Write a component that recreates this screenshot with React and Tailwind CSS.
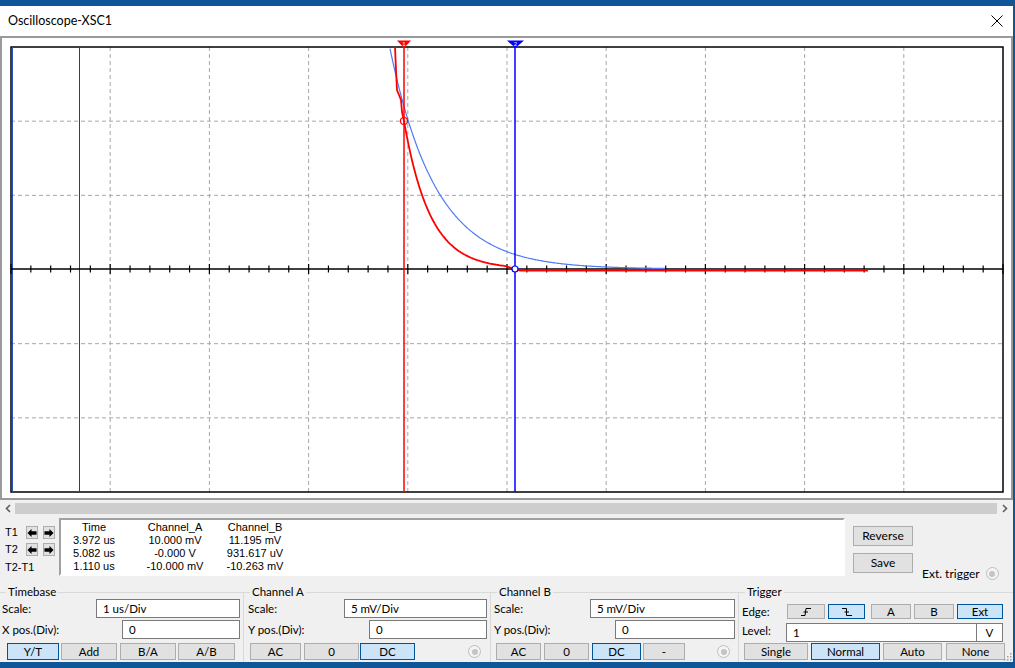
import React from "react";

const L = 11;
const R = 1003;
const T = 47;
const B = 492;
const AXIS = 269;

function pts(list) {
  return list.map(([x, y]) => `${x.toFixed(1)},${y.toFixed(1)}`).join(" ");
}

function redTrace() {
  const out = [[395, 47], [396, 70], [397, 90], [401, 100], [402, 112], [404, 121]];
  for (let x = 405; x <= 505; x += 1) {
    out.push([x, AXIS - 148 * Math.exp(-(x - 404) / 26)]);
  }
  out.push([520, 270.5], [868, 270.5]);
  return out;
}

function blueTrace() {
  const out = [];
  for (let x = 389; x <= 665; x += 1) {
    const y = AXIS - 149 * Math.exp(-(x - 408) / 46);
    if (y >= T) out.push([x, y]);
  }
  return out;
}

function Screen() {
  const dx = (R - L) / 10;
  const dy = (B - T) / 6;
  const ticks = [];
  for (let i = 0; i <= 50; i++) {
    const x = L + i * (dx / 5);
    const h = i % 5 === 0 ? 5 : 3.5;
    ticks.push(<line key={i} x1={x} x2={x} y1={AXIS - h} y2={AXIS + h} stroke="#000" strokeWidth="1.2" />);
  }
  return (
    <svg width="1008" height="460" viewBox="2 38 1008 460" className="block">
      <rect x="2" y="38" width="1008" height="460" fill="#fff" />
      {[1, 2, 3, 4, 5, 6, 7, 8, 9].map((k) => (
        <line key={"v" + k} x1={L + k * dx} x2={L + k * dx} y1={T} y2={B} stroke="#a8a8a8" strokeDasharray="4 3" />
      ))}
      {[1, 2, 4, 5].map((k) => (
        <line key={"h" + k} x1={L} x2={R} y1={T + k * dy} y2={T + k * dy} stroke="#a8a8a8" strokeDasharray="4 3" />
      ))}
      <rect x={L} y={T} width={R - L} height={B - T} fill="none" stroke="#000" strokeWidth="1.5" />
      <line x1="12.5" x2="12.5" y1={T} y2={B} stroke="#2a4fc0" strokeWidth="1" />
      <line x1="79.5" x2="79.5" y1={T} y2={B} stroke="#d00000" strokeWidth="1" />
      <line x1={L} x2={R} y1={AXIS} y2={AXIS} stroke="#000" strokeWidth="1.5" />
      {ticks}
      <polyline points={pts(blueTrace())} fill="none" stroke="#4f7af5" strokeWidth="1.2" />
      <polyline points={pts(redTrace())} fill="none" stroke="#ff0000" strokeWidth="1.8" />
      <line x1="404" x2="404" y1="41" y2={B} stroke="#ff0000" strokeWidth="1.5" />
      <line x1="515" x2="515" y1="41" y2={B} stroke="#0000ff" strokeWidth="1.5" />
      <polygon points="397,40.5 411,40.5 404,48" fill="#ff0000" />
      <text x="404" y="46" fontSize="6" fill="#fff" textAnchor="middle" fontFamily="Liberation Sans">1</text>
      <polygon points="507,40.5 524,40.5 515.5,48" fill="#0000ff" />
      <text x="515.5" y="46" fontSize="6" fill="#fff" textAnchor="middle" fontFamily="Liberation Sans">2</text>
      <circle cx="404" cy="121" r="3.5" fill="none" stroke="#ff0000" strokeWidth="1.2" />
      <circle cx="515" cy="269" r="3" fill="#fff" stroke="#0000ff" strokeWidth="1.2" />
    </svg>
  );
}

function Btn({ children, on, className = "" }) {
  return (
    <div
      className={`flex items-center justify-center border ${on ? "bg-[#cce4f7] border-[#005499]" : "bg-[#e1e1e1] border-[#adadad]"} ${className}`}
    >
      {children}
    </div>
  );
}

function Field({ value, className = "" }) {
  return (
    <div className={`h-[19px] bg-white border border-[#7a7a7a] flex items-center pl-[6px] ${className}`}>{value}</div>
  );
}

function Radio({ className = "" }) {
  return (
    <div className={`w-[13px] h-[13px] rounded-full border border-[#bdbdbd] bg-[#f4f4f4] flex items-center justify-center ${className}`}>
      <div className="w-[6px] h-[6px] rounded-full bg-[#c4c4c4]" />
    </div>
  );
}

function Group({ title, className = "", children }) {
  return (
    <div className={`border-t border-r border-[#d9d9d9] h-[82px] shrink-0 ${className}`}>
      <div className="-mt-[8px] ml-[6px] w-fit px-[2px] bg-[#f0f0f0] leading-[14px]">{title}</div>
      {children}
    </div>
  );
}

function Arrow({ dir }) {
  const d = dir === "left" ? "M0.5 5 L5 0.5 L5 3 L10.5 3 L10.5 7 L5 7 L5 9.5 Z" : "M10.5 5 L6 0.5 L6 3 L0.5 3 L0.5 7 L6 7 L6 9.5 Z";
  return (
    <div className="w-[12px] h-[13px] bg-[#e1e1e1] border border-[#adadad] flex items-center justify-center">
      <svg width="11" height="10" viewBox="0 0 11 10">
        <path d={d} fill="#000" />
      </svg>
    </div>
  );
}

function EdgeIcon({ falling }) {
  return (
    <svg width="12" height="10" viewBox="0 0 12 10">
      {falling ? (
        <path d="M1 1.5 H5.5 V8.5 H11 M3.5 5 H8" fill="none" stroke="#000" strokeWidth="1" />
      ) : (
        <path d="M1 8.5 H5 L6 1.5 H11 M3.5 5 H8" fill="none" stroke="#000" strokeWidth="1" />
      )}
    </svg>
  );
}

export default function App() {
  const readout = [
    ["Time", "Channel_A", "Channel_B"],
    ["3.972 us", "10.000 mV", "11.195 mV"],
    ["5.082 us", "-0.000 V", "931.617 uV"],
    ["1.110 us", "-10.000 mV", "-10.263 mV"],
  ];

  return (
    <div className="w-[1015px] h-[668px] bg-[#0f5698] pt-[6px] overflow-hidden font-['Lato','Liberation_Sans',sans-serif] text-[11.5px] text-black">
      <div className="relative w-[1013px] h-[656px] bg-[#f0f0f0] flex flex-col overflow-hidden">
        <div className="h-[30px] shrink-0 bg-white flex items-center justify-between pl-[8px] pr-[10px] text-[12.5px]">
          <span>Oscilloscope-XSC1</span>
          <svg width="12" height="12" viewBox="0 0 12 12">
            <path d="M0.5 0.5 L11.5 11.5 M11.5 0.5 L0.5 11.5" stroke="#000" strokeWidth="1" />
          </svg>
        </div>

        <div className="h-[464px] shrink-0 border-2 border-[#9a9a9a] bg-white">
          <Screen />
        </div>

        <div className="h-[15px] shrink-0 flex items-center pt-[3px] pb-[1px]">
          <div className="w-[15px] h-full flex items-center justify-center">
            <svg width="6" height="9" viewBox="0 0 6 9">
              <path d="M5 1 L1.5 4.5 L5 8" fill="none" stroke="#606060" strokeWidth="1.6" />
            </svg>
          </div>
          <div className="flex-1 h-full bg-[#cdcdcd]" />
          <div className="w-[16px] h-full flex items-center justify-center">
            <svg width="6" height="9" viewBox="0 0 6 9">
              <path d="M1 1 L4.5 4.5 L1 8" fill="none" stroke="#606060" strokeWidth="1.6" />
            </svg>
          </div>
        </div>

        <div className="h-[65px] shrink-0 flex font-['Liberation_Sans',Arial,sans-serif] text-[11px]">
          <div className="w-[59px] pt-[11px] pl-[5px]">
            <div className="flex items-center h-[13px]">
              <span className="w-[21px]">T1</span>
              <Arrow dir="left" />
              <div className="w-[5px]" />
              <Arrow dir="right" />
            </div>
            <div className="flex items-center h-[13px] mt-[4px]">
              <span className="w-[21px]">T2</span>
              <Arrow dir="left" />
              <div className="w-[5px]" />
              <Arrow dir="right" />
            </div>
            <div className="mt-[5px] leading-[13px]">T2-T1</div>
          </div>
          <div className="mt-[3px] w-[786px] h-[58px] bg-white border-2 border-t-[#a0a0a0] border-l-[#a0a0a0] border-r-white border-b-white pt-[1px]">
            {readout.map((row, i) => (
              <div key={i} className="flex leading-[13px]">
                <div className="w-[66px] text-center">{row[0]}</div>
                <div className="w-[96px] text-center">{row[1]}</div>
                <div className="w-[64px] text-center">{row[2]}</div>
              </div>
            ))}
          </div>
          <div className="ml-[8px] pt-[11px] font-['Lato','Liberation_Sans',sans-serif] text-[12px]">
            <Btn className="w-[60px] h-[20px]">Reverse</Btn>
            <div className="flex items-end mt-[7px]">
              <Btn className="w-[60px] h-[20px]">Save</Btn>
              <span className="ml-[9px] leading-[14px] -mb-[8px]">Ext. trigger</span>
              <Radio className="ml-[6px] -mb-[7px]" />
            </div>
          </div>
        </div>

        <div className="flex shrink-0 mt-[12px]">
          <Group title="Timebase" className="w-[244px]">
            <div className="flex items-center h-[19px]">
              <span className="pl-[2px]">Scale:</span>
              <Field value="1 us/Div" className="ml-auto mr-[3px] w-[144px]" />
            </div>
            <div className="flex items-center h-[19px] mt-[2px]">
              <span className="pl-[2px]">X pos.(Div):</span>
              <Field value="0" className="ml-auto mr-[3px] w-[118px] pl-[4px]" />
            </div>
            <div className="flex mt-[4px] h-[17px]">
              <Btn on className="ml-[7px] w-[52px]">Y/T</Btn>
              <Btn className="ml-[2px] w-[56px]">Add</Btn>
              <Btn className="ml-[3px] w-[56px]">B/A</Btn>
              <Btn className="ml-[2px] w-[57px]">A/B</Btn>
            </div>
          </Group>

          <Group title="Channel A" className="w-[247px]">
            <div className="flex items-center h-[19px]">
              <span className="pl-[4px]">Scale:</span>
              <Field value="5 mV/Div" className="ml-auto mr-[3px] w-[143px]" />
            </div>
            <div className="flex items-center h-[19px] mt-[2px]">
              <span className="pl-[4px]">Y pos.(Div):</span>
              <Field value="0" className="ml-auto mr-[3px] w-[118px] pl-[4px]" />
            </div>
            <div className="flex items-center mt-[4px] h-[17px]">
              <Btn className="ml-[6px] w-[51px] h-full">AC</Btn>
              <Btn className="ml-[3px] w-[55px] h-full">0</Btn>
              <Btn on className="ml-[1px] w-[55px] h-full">DC</Btn>
              <Radio className="ml-[53px]" />
            </div>
          </Group>

          <Group title="Channel B" className="w-[248px]">
            <div className="flex items-center h-[19px]">
              <span className="pl-[3px]">Scale:</span>
              <Field value="5 mV/Div" className="ml-auto mr-[3px] w-[145px]" />
            </div>
            <div className="flex items-center h-[19px] mt-[2px]">
              <span className="pl-[3px]">Y pos.(Div):</span>
              <Field value="0" className="ml-auto mr-[3px] w-[120px] pl-[4px]" />
            </div>
            <div className="flex items-center mt-[4px] h-[17px]">
              <Btn className="ml-[5px] w-[45px] h-full">AC</Btn>
              <Btn className="ml-[3px] w-[45px] h-full">0</Btn>
              <Btn on className="ml-[3px] w-[49px] h-full">DC</Btn>
              <Btn className="ml-[2px] w-[42px] h-full">-</Btn>
              <Radio className="ml-[32px]" />
            </div>
          </Group>

          <Group title="Trigger" className="flex-1 shrink border-r-0">
            <div className="flex items-center h-[15px] mt-[5px]">
              <span className="pl-[3px] w-[48px]">Edge:</span>
              <Btn className="w-[38px] h-full"><EdgeIcon /></Btn>
              <Btn on className="ml-[3px] w-[37px] h-full"><EdgeIcon falling /></Btn>
              <Btn className="ml-[6px] w-[40px] h-full">A</Btn>
              <Btn className="ml-[3px] w-[40px] h-full">B</Btn>
              <Btn on className="ml-[3px] w-[46px] h-full">Ext</Btn>
            </div>
            <div className="flex items-center h-[19px] mt-[4px]">
              <span className="pl-[3px] w-[47px] -mt-[3px]">Level:</span>
              <Field value="1" className="w-[191px]" />
              <div className="w-[26px] h-[19px] bg-white border border-[#7a7a7a] border-l-0 flex items-center justify-center">V</div>
            </div>
            <div className="flex mt-[1px] h-[17px]">
              <Btn className="ml-[5px] w-[64px]">Single</Btn>
              <Btn on className="ml-[3px] w-[69px]">Normal</Btn>
              <Btn className="ml-[3px] w-[59px]">Auto</Btn>
              <Btn className="ml-[4px] w-[59px]">None</Btn>
            </div>
          </Group>
        </div>

        <svg className="absolute right-[1px] bottom-[1px]" width="9" height="9" viewBox="0 0 9 9">
          {[[7, 1], [7, 4], [4, 4], [7, 7], [4, 7], [1, 7]].map(([x, y], i) => (
            <rect key={i} x={x} y={y} width="1.5" height="1.5" fill="#a0a0a0" />
          ))}
        </svg>
      </div>
    </div>
  );
}
